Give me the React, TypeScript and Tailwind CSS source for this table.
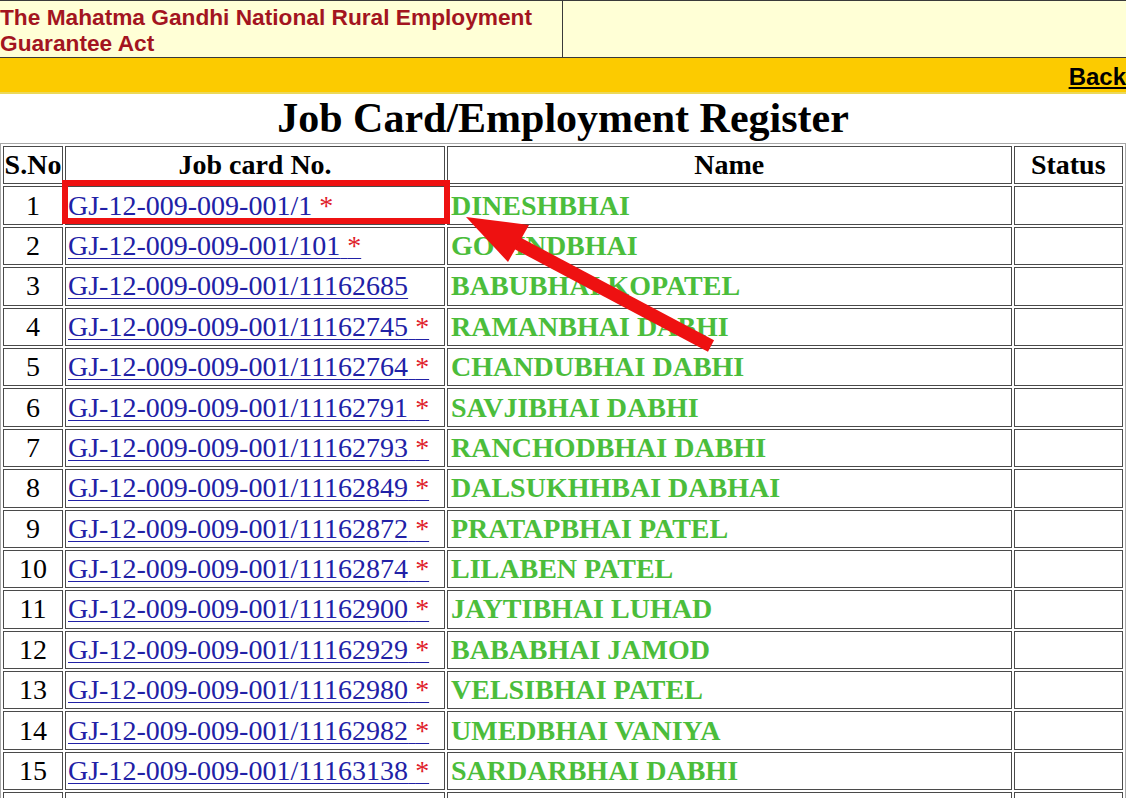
import React from "react";

const rows: [string, string, boolean, string][] = [
  ["1", "GJ-12-009-009-001/1", true, "DINESHBHAI"],
  ["2", "GJ-12-009-009-001/101", true, "GOVINDBHAI"],
  ["3", "GJ-12-009-009-001/11162685", false, "BABUBHAI KOPATEL"],
  ["4", "GJ-12-009-009-001/11162745", true, "RAMANBHAI DABHI"],
  ["5", "GJ-12-009-009-001/11162764", true, "CHANDUBHAI DABHI"],
  ["6", "GJ-12-009-009-001/11162791", true, "SAVJIBHAI DABHI"],
  ["7", "GJ-12-009-009-001/11162793", true, "RANCHODBHAI DABHI"],
  ["8", "GJ-12-009-009-001/11162849", true, "DALSUKHHBAI DABHAI"],
  ["9", "GJ-12-009-009-001/11162872", true, "PRATAPBHAI PATEL"],
  ["10", "GJ-12-009-009-001/11162874", true, "LILABEN PATEL"],
  ["11", "GJ-12-009-009-001/11162900", true, "JAYTIBHAI LUHAD"],
  ["12", "GJ-12-009-009-001/11162929", true, "BABABHAI JAMOD"],
  ["13", "GJ-12-009-009-001/11162980", true, "VELSIBHAI PATEL"],
  ["14", "GJ-12-009-009-001/11162982", true, "UMEDBHAI VANIYA"],
  ["15", "GJ-12-009-009-001/11163138", true, "SARDARBHAI DABHI"],
];

export default function App() {
  return (
    <div className="relative w-[1126px] h-[798px] overflow-hidden bg-white">
      {/* Top header */}
      <div className="flex h-[58px] border-t border-b border-[#3a3a3a] bg-[#ffffd6]">
        <div className="w-[563px] border-r border-[#3a3a3a] pt-[3px] font-['Liberation_Sans',Arial,sans-serif] text-[22.7px] leading-[26px] font-bold text-[#a3151f]">
          The Mahatma Gandhi National Rural Employment Guarantee Act
        </div>
        <div className="flex-1" />
      </div>
      {/* Yellow bar */}
      <div className="flex h-[36px] items-center justify-end border-b-2 border-[#ecd95a] bg-[#fccb00]">
        <a className="font-['Liberation_Sans',Arial,sans-serif] text-[24px] font-bold text-black underline leading-none pt-[4px]">
          Back
        </a>
      </div>
      {/* Title */}
      <div className="h-[49px] text-center font-['Liberation_Serif','Times_New_Roman',serif] text-[42px] font-bold leading-[48px] text-black">
        Job Card/Employment Register
      </div>
      {/* Table */}
      <table className="w-full table-fixed border-separate border-spacing-x-[2.5px] border-spacing-y-[2px] border border-[#a8a8a8] font-['Liberation_Serif','Times_New_Roman',serif] text-[28px] text-black">
        <thead>
          <tr className="h-[38.4px]">
            <th className="w-[60px] border border-[#4a4a4a] p-0 text-center font-bold leading-none">S.No</th>
            <th className="w-[380px] border border-[#4a4a4a] p-0 text-center font-bold leading-none">Job card No.</th>
            <th className="w-[564.5px] border border-[#4a4a4a] p-0 text-center font-bold leading-none">Name</th>
            <th className="border border-[#4a4a4a] p-0 text-center font-bold leading-none">Status</th>
          </tr>
        </thead>
        <tbody>
          {rows.map(([n, card, star, name]) => (
            <tr key={n} className="h-[38.4px]">
              <td className="border border-[#4a4a4a] p-0 text-center leading-none">{n}</td>
              <td className="border border-[#4a4a4a] px-[2px] py-0 leading-none whitespace-nowrap">
                <a className="text-[#2121a6] underline decoration-1 underline-offset-[3px]">
                  {card}
                  {star ? (
                    <>
                      {" "}
                      <span className="text-[#e0202a]">*</span>
                    </>
                  ) : null}
                </a>
              </td>
              <td className="border border-[#4a4a4a] pl-[3px] py-0 font-bold leading-none text-[#4bbd3b] whitespace-nowrap">
                {name}
              </td>
              <td className="border border-[#4a4a4a] p-0" />
            </tr>
          ))}
          <tr className="h-[38.4px]">
            <td className="border border-[#4a4a4a] p-0" />
            <td className="border border-[#4a4a4a] p-0" />
            <td className="border border-[#4a4a4a] p-0" />
            <td className="border border-[#4a4a4a] p-0" />
          </tr>
        </tbody>
      </table>
      {/* Annotation overlay */}
      <svg
        className="pointer-events-none absolute left-0 top-0"
        width={1126}
        height={798}
        viewBox="0 0 1126 798"
      >
        <rect x={65} y={183} width={382} height={38} fill="none" stroke="#ee1111" strokeWidth={6} />
        <line x1={515} y1={242} x2={711} y2={346} stroke="#ee1111" strokeWidth={13} />
        <polygon points="466,217 508,262 529,225" fill="#ee1111" />
      </svg>
    </div>
  );
}
